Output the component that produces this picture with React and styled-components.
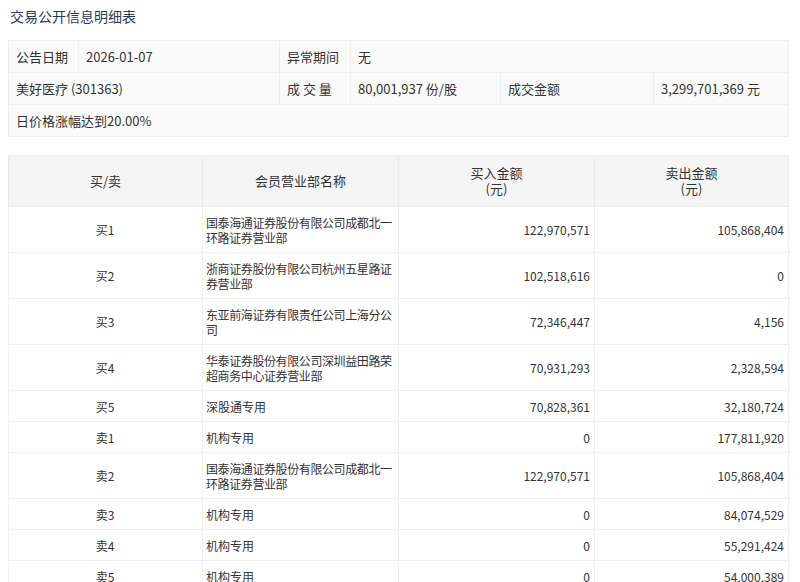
import React from "react";
import styled, { createGlobalStyle } from "styled-components";

const G = createGlobalStyle`
  body { margin: 0; background: #fff; font-family: "Microsoft YaHei", "Noto Sans CJK SC", sans-serif; color: #333; }
`;
const Wrap = styled.div`padding: 6px 12px 0 8px;`;
const Title = styled.div`font-size: 14px; color: #2b3a55; height: 22px; line-height: 20px; padding-left: 2px; margin-bottom: 12px;`;
const Col = styled.col`width: ${p => p.$w}px;`;
const Info = styled.table`
  width: 780px; border-collapse: collapse; table-layout: fixed; font-size: 13px; color: #333;
  td { background: #fafafa; border: 1px solid #efefef; height: 31px; padding: 0 7px; white-space: nowrap; }
`;
const Main = styled.table`
  width: 780px; margin-top: 18px; border-collapse: collapse; table-layout: fixed; font-size: 12px; color: #333;
  th { background: #f5f5f5; border: 1px solid #ebebeb; font-weight: normal; height: 50px; line-height: 16px; font-size: 13px; padding: 0; }
  td { border: 1px solid #efefef; padding: 0 4px 0 3px; line-height: 15px; box-sizing: border-box; }
`;
const Cell = styled.td`
  text-align: ${p => p.$a || "left"};
  height: ${p => p.$h}px;
  letter-spacing: ${p => (p.$wide ? "-0.4px" : "0")};
`;

const rows = [
  ["买1", "国泰海通证券股份有限公司成都北一环路证券营业部", "122,970,571", "105,868,404"],
  ["买2", "浙商证券股份有限公司杭州五星路证券营业部", "102,518,616", "0"],
  ["买3", "东亚前海证券有限责任公司上海分公司", "72,346,447", "4,156"],
  ["买4", "华泰证券股份有限公司深圳益田路荣超商务中心证券营业部", "70,931,293", "2,328,594"],
  ["买5", "深股通专用", "70,828,361", "32,180,724"],
  ["卖1", "机构专用", "0", "177,811,920"],
  ["卖2", "国泰海通证券股份有限公司成都北一环路证券营业部", "122,970,571", "105,868,404"],
  ["卖3", "机构专用", "0", "84,074,529"],
  ["卖4", "机构专用", "0", "55,291,424"],
  ["卖5", "机构专用", "0", "54,000,389"],
];

export default function App() {
  return (
    <Wrap>
      <G />
      <Title>交易公开信息明细表</Title>
      <Info>
        <colgroup>
          <Col $w={70} /><Col $w={201} /><Col $w={71} />
          <Col $w={150} /><Col $w={153} /><Col $w={135} />
        </colgroup>
        <tbody>
          <tr><td>公告日期</td><td>2026-01-07</td><td>异常期间</td><td colSpan={3}>无</td></tr>
          <tr><td colSpan={2}>美好医疗 (301363)</td><td>成 交 量</td><td>80,001,937 份/股</td><td>成交金额</td><td>3,299,701,369 元</td></tr>
          <tr><td colSpan={6}>日价格涨幅达到20.00%</td></tr>
        </tbody>
      </Info>
      <Main>
        <colgroup>
          <Col $w={194} /><Col $w={196} /><Col $w={196} /><Col $w={194} />
        </colgroup>
        <thead>
          <tr><th>买/卖</th><th>会员营业部名称</th><th>买入金额<br />(元)</th><th>卖出金额<br />(元)</th></tr>
        </thead>
        <tbody>
          {rows.map((r, i) => {
            const two = r[1].length > 16;
            const h = two ? 46 : 31;
            return (
              <tr key={i}>
                <Cell $a="center" $h={h}>{r[0]}</Cell>
                <Cell $h={h} $wide={two}>{r[1]}</Cell>
                <Cell $a="right" $h={h}>{r[2]}</Cell>
                <Cell $a="right" $h={h}>{r[3]}</Cell>
              </tr>
            );
          })}
        </tbody>
      </Main>
    </Wrap>
  );
}
